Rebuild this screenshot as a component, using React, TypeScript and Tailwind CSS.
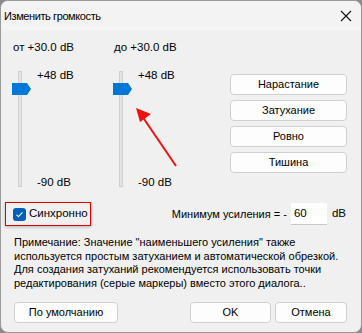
const font = { fontFamily: '"Liberation Sans", Arial, sans-serif' };

const Slider = ({ label }: { label: string }) => (
  <div className="flex flex-col w-[101px]">
    <div className="pl-[1px] h-[14px] leading-[14px] text-[11.5px]">{label}</div>
    <div className="flex mt-[17px]">
      <div className="relative w-[20px] h-[116px]">
        <div className="absolute left-[6px] top-0 w-[4px] h-[116px] bg-[#e3e3e3] border border-[#cfcfcf]" />
        <svg className="absolute left-0 top-[12px]" width="20" height="12" viewBox="0 0 20 12">
          <path d="M0 0 H15 L19 6 L15 12 H0 Z" fill="#0078d7" />
        </svg>
      </div>
      <div className="flex flex-col justify-between ml-[5px] text-[11.5px] leading-[14px] mt-[-3px] h-[121px]">
        <span>+48 dB</span>
        <span>-90 dB</span>
      </div>
    </div>
  </div>
);

const Btn = ({ children, className = '' }: { children: React.ReactNode; className?: string }) => (
  <div
    className={`h-[21px] flex items-center justify-center bg-[#fdfdfd] border border-[#d0d0d0] rounded-[4px] text-[11px] ${className}`}
  >
    {children}
  </div>
);

export default function App() {
  return (
    <div className="w-[362px] h-[333px] bg-[#8a8a8a]" style={font}>
      <div className="relative w-[362px] h-[333px] bg-[#f0f0f0] rounded-[8px] border border-[#9a9a9a] overflow-hidden text-[#000] flex flex-col">
        <div className="h-[30px] flex items-center pl-[3px] pr-[9px] bg-[#f3f3f3]">
          <span className="text-[11px] tracking-[-0.4px]">Изменить громкость</span>
          <svg className="ml-auto" width="12" height="12" viewBox="0 0 12 12">
            <path d="M1 1 L11 11 M11 1 L1 11" stroke="#111" strokeWidth="1.1" />
          </svg>
        </div>

        <div className="flex pt-[9px] pl-[11px] pr-[14px]">
          <Slider label="от +30.0 dB" />
          <Slider label="до +30.0 dB" />
          <div className="ml-auto flex flex-col gap-[5px] w-[117px] mt-[34px]">
            <Btn>Нарастание</Btn>
            <Btn>Затухание</Btn>
            <Btn>Ровно</Btn>
            <Btn>Тишина</Btn>
          </div>
        </div>

        <div className="flex items-center mt-[13px] pl-[4px] pr-[15px]">
          <div className="flex items-center w-[86px] h-[24px] border border-[#e00000] shadow-[0_1px_3px_rgba(0,0,0,0.25)] pl-[7px]">
            <div className="w-[13px] h-[13px] rounded-[3px] bg-[#005fb8] flex items-center justify-center">
              <svg width="9" height="9" viewBox="0 0 9 9">
                <path d="M1.5 4.8 L3.5 6.6 L7.5 2.4" stroke="#fff" strokeWidth="1.1" fill="none" />
              </svg>
            </div>
            <span className="ml-[3px] text-[11.5px]">Синхронно</span>
          </div>
          <span className="ml-auto text-[11px]">Минимум усиления = -</span>
          <div className="ml-[4px] w-[36px] h-[22px] bg-white border-b border-[#c8c8c8] text-[11.5px] flex items-center pl-[3px]">60</div>
          <span className="ml-[5px] text-[11.5px]">dB</span>
        </div>

        <p className="mt-[10px] px-[13px] text-[11px] leading-[13.5px]">
          Примечание: Значение "наименьшего усиления" также используется простым затуханием и автоматической обрезкой.
          Для создания затуханий рекомендуется использовать точки редактирования (серые маркеры) вместо этого диалога..
        </p>

        <div className="flex mt-auto mb-[9px] pl-[13px] pr-[14px]">
          <Btn className="w-[104px]">По умолчанию</Btn>
          <Btn className="w-[81px] ml-auto">OK</Btn>
          <Btn className="w-[72px] ml-[4px]">Отмена</Btn>
        </div>

        <svg className="absolute left-0 top-0 pointer-events-none" width="362" height="333">
          <line x1="175" y1="165" x2="141" y2="115" stroke="#ee1111" strokeWidth="2" />
          <path d="M135 107 L150 113 L139 121 Z" fill="#ee1111" />
        </svg>
      </div>
    </div>
  );
}
